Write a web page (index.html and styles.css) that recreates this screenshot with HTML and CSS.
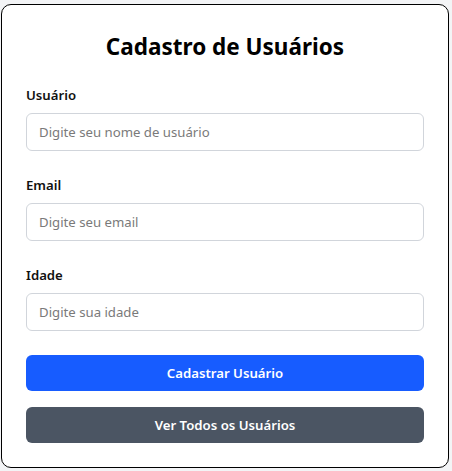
FILE: index.html
```html
<!DOCTYPE html>
<html lang="pt-BR">
<head>
<meta charset="utf-8">
<title>Cadastro de Usuários</title>
<link rel="stylesheet" href="styles.css">
</head>
<body>
<main class="page">
  <form class="card">
    <h1 class="title">Cadastro de Usuários</h1>
    <div class="field">
      <label class="label" for="usuario">Usuário</label>
      <input class="input" id="usuario" type="text" placeholder="Digite seu nome de usuário">
    </div>
    <div class="field">
      <label class="label" for="email">Email</label>
      <input class="input" id="email" type="email" placeholder="Digite seu email">
    </div>
    <div class="field">
      <label class="label" for="idade">Idade</label>
      <input class="input" id="idade" type="text" placeholder="Digite sua idade">
    </div>
    <div class="actions">
      <button class="btn btn-primary" type="button">Cadastrar Usuário</button>
      <button class="btn btn-secondary" type="button">Ver Todos os Usuários</button>
    </div>
  </form>
</main>
</body>
</html>
```
FILE: styles.css
```css
* { box-sizing: border-box; }
html, body { margin: 0; padding: 0; }
body {
  background: #f3f4f6;
  font-family: "Noto Sans", "Open Sans", sans-serif;
  color: #000;
}
.page {
  padding: 4px 3px 4px 1px;
}
.card {
  width: 448px;
  background: #fff;
  border: 1px solid #000;
  border-radius: 10px;
  padding: 24px;
  display: flex;
  flex-direction: column;
  gap: 24px;
}
.title {
  margin: 0 0 -4px;
  font-size: 22.5px;
  line-height: 36px;
  font-weight: 700;
  text-align: center;
}
.field {
  display: flex;
  flex-direction: column;
  gap: 8px;
}
.label {
  font-size: 13.2px;
  line-height: 20px;
  font-weight: 600;
  color: #111;
}
.input {
  height: 38px;
  border: 1px solid #d1d5db;
  border-radius: 6px;
  padding: 0 12px;
  font-family: inherit;
  font-size: 13.2px;
  color: #111;
  background: #fff;
}
.input::placeholder { color: #7a7a7a; }
.actions {
  display: flex;
  flex-direction: column;
  gap: 16px;
}
.btn {
  height: 36px;
  border: none;
  border-radius: 6px;
  color: #fff;
  font-family: inherit;
  font-size: 13.2px;
  font-weight: 600;
}
.btn-primary { background: #175cff; }
.btn-secondary { background: #4b5563; }
```
